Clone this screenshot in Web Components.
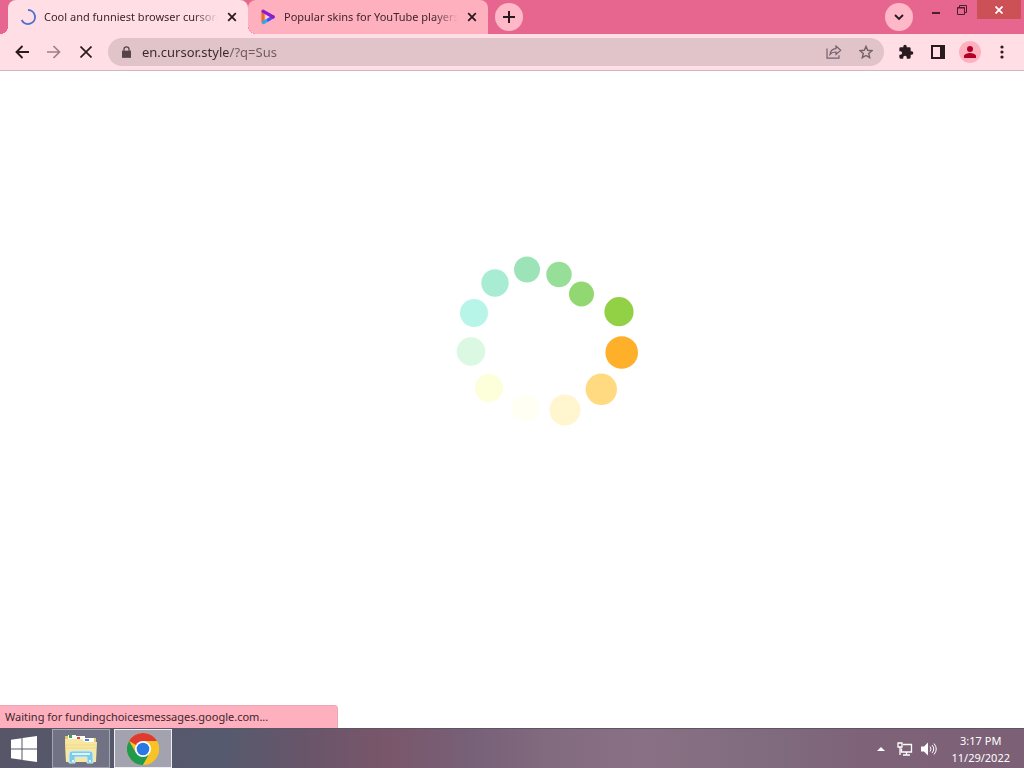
<!DOCTYPE html>
<html lang="en">
<head>
<meta charset="utf-8">
<title>Cool and funniest browser cursors</title>
<style>
  html, body { height: 100%; }
  body {
    margin: 0;
    font-family: "Noto Sans", "Open Sans", sans-serif;
    font-size: 11px;
    color: #3d252c;
    --frame: #e66690;
    --tab-active: #ffdfe5;
    --tab-idle: #ffb0be;
    --ink: #2a1a20;
  }
</style>
</head>
<body>
<desktop-screen></desktop-screen>

<script>
const define = (name, html, setup) => {
  const template = document.createElement('template');
  template.innerHTML = html;
  customElements.define(name, class extends HTMLElement {
    constructor() {
      super();
      this.attachShadow({ mode: 'open' }).append(template.content.cloneNode(true));
    }
    connectedCallback() { if (setup) setup(this, this.shadowRoot); }
  });
};

define('icon-button', `
  <style>
    :host { display: block; flex: none; width: 32px; height: 28px; }
    button {
      display: grid; place-items: center; width: 100%; height: 100%;
      margin: 0; padding: 0; border: 0; background: none; color: inherit; font: inherit;
      border-radius: var(--button-radius, 14px);
    }
  </style>
  <button type="button"><slot></slot></button>
`, (host, root) => root.querySelector('button').setAttribute('aria-label', host.getAttribute('label')));

define('browser-tab', `
  <style>
    :host { display: block; position: relative; flex: 0 1 240px; min-width: 0; height: 34px; background: var(--tab-idle); border-radius: 8px 8px 0 8px; }
    :host([active]) { background: var(--tab-active); border-radius: 8px 8px 0 0; z-index: 1; }
    :host([active])::before, :host([active])::after {
      content: ""; position: absolute; bottom: 0; width: 8px; height: 8px;
    }
    :host([active])::before { right: 100%; background: radial-gradient(circle at 0 0, transparent 8px, var(--tab-active) 8px); }
    :host([active])::after { left: 100%; background: radial-gradient(circle at 100% 0, transparent 8px, var(--tab-active) 8px); }
    .row { display: flex; align-items: center; height: 100%; padding: 0 6px 0 12px; }
    .fav { flex: none; display: grid; width: 16px; height: 16px; margin-right: 8px; }
    .title {
      flex: 1; min-width: 0; overflow: hidden; white-space: nowrap; line-height: 18px;
      -webkit-mask-image: linear-gradient(to left, transparent, #000 24px);
      mask-image: linear-gradient(to left, transparent, #000 24px);
    }
    icon-button { width: 20px; height: 20px; margin-left: 4px; color: var(--ink); }
  </style>
  <div class="row">
    <span class="fav"><slot name="favicon"></slot></span>
    <span class="title"><slot></slot></span>
    <icon-button label="Close tab"><svg width="10" height="10" viewBox="0 0 10 10" stroke="currentColor" stroke-width="1.8"><path d="M1.200 1.200l7.600 7.600M8.800 1.200l-7.600 7.600"/></svg></icon-button>
  </div>
`);

define('tab-strip', `
  <style>
    :host { display: flex; align-items: flex-start; height: 34px; padding: 0 3px 0 8px; background: var(--frame); }
    .tabs { display: flex; flex: 0 1 480px; min-width: 0; }
    svg { display: block; }
    .round { width: 28px; margin-top: 3px; background: #ffb8c8; border-radius: 50%; color: var(--ink); }
    .new { margin-left: 7px; }
    .search { margin-left: auto; }
    .window { display: flex; margin-left: 10px; color: #4b1f30; }
    .window icon-button { width: 26px; height: 19px; }
    .window .close { width: 44px; margin-left: 2px; background: #cc5156; color: #fff; --button-radius: 0; }
  </style>
  <div class="tabs">
    <browser-tab active>
      <svg slot="favicon" width="16" height="16" viewBox="0 0 16 16" fill="none" stroke="#4c70d0" stroke-width="1.9"><path d="M8 1a7 7 0 1 1-6.300 10"/></svg>
      Cool and funniest browser cursors
    </browser-tab>
    <browser-tab>
      <svg slot="favicon" width="16" height="16" viewBox="0 0 16 16" stroke-linejoin="round" stroke-linecap="round" fill="none" stroke-width="3.200">
        <path d="M3 3v10" stroke="#f06a28"/><path d="M3.500 13.500l5-2.800" stroke="#2fa6f0"/><path d="M8.500 10.700L13 8" stroke="#5a48e8"/><path d="M3 2.200L13.200 8" stroke="#8a1cd2"/>
        <path d="M5.500 6l3.500 2-3.500 2z" fill="#ffd0dc" stroke="none"/>
      </svg>
      Popular skins for YouTube players
    </browser-tab>
  </div>
  <icon-button class="round new" label="New tab"><svg width="12" height="12" viewBox="0 0 12 12" stroke="currentColor" stroke-width="2"><path d="M6 0v12M0 6h12"/></svg></icon-button>
  <icon-button class="round search" label="Search tabs"><svg width="10" height="7" viewBox="0 0 10 7" fill="none" stroke="currentColor" stroke-width="1.900"><path d="M1 1l4 4 4-4"/></svg></icon-button>
  <div class="window">
    <icon-button label="Minimize"><svg width="10" height="14" viewBox="0 0 10 14"><path d="M1 9h8v2H1z" fill="currentColor"/></svg></icon-button>
    <icon-button label="Restore"><svg width="10" height="10" viewBox="0 0 10 10" fill="none" stroke="currentColor"><path d="M.5 2.500h7v7h-7zM2.500 2.500v-2h7v7h-2M.5 3h7"/></svg></icon-button>
    <icon-button class="close" label="Close"><svg width="8" height="8" viewBox="0 0 8 8" stroke="currentColor" stroke-width="1.800"><path d="M.5.5l7 7M7.500.5l-7 7"/></svg></icon-button>
  </div>
`);

define('address-bar', `
  <style>
    :host { display: flex; flex: 1; align-items: center; min-width: 0; height: 28px; margin: 0 6px; padding: 0 2px; background: #e0c4ca; border-radius: 14px; box-sizing: border-box; color: #76616a; }
    .lock { color: #57444b; }
    input {
      flex: 1; min-width: 0; height: 28px; margin: 0; padding: 0; border: 0; outline: 0;
      font: inherit; font-size: 13px; color: transparent;
      background: linear-gradient(90deg, #3b272e 86px, #6f5860 86px);
      -webkit-background-clip: text; background-clip: text;
    }
  </style>
  <icon-button class="lock" label="View site information"><svg width="9" height="12" viewBox="0 0 10 13"><path d="M0 5h10v8H0z" fill="currentColor"/><path d="M2.200 5.500V3.500a2.800 2.800 0 0 1 5.600 0v2" fill="none" stroke="currentColor" stroke-width="1.400"/></svg></icon-button>
  <input type="text" aria-label="Address and search bar" value="en.cursor.style/?q=Sus" spellcheck="false">
  <icon-button label="Share this page"><svg width="16" height="14" viewBox="0 0 16 14" fill="none" stroke="currentColor" stroke-width="1.200"><path d="M1 3.500v9.700h12v-3M4 9.500c.4-3.800 2.600-5.700 6-5.900V1l4.700 4.300L10 9.500V7C7.500 7 5.500 7.600 4 9.500z"/></svg></icon-button>
  <icon-button label="Bookmark this tab"><svg width="14" height="14" viewBox="0 0 14 14" fill="none" stroke="currentColor" stroke-width="1.400"><path d="M7 1.400l1.700 3.900 4.200.4-3.200 2.800 1 4.200L7 10.500l-3.700 2.200 1-4.200L1.100 5.700l4.200-.4z"/></svg></icon-button>
`);

define('browser-toolbar', `
  <style>
    :host { display: flex; align-items: center; height: 36px; padding: 0 6px; background: var(--tab-active); border-bottom: 1px solid #cdb9bd; color: var(--ink); }
    .dim { color: #9d8188; }
    .avatar { display: grid; place-items: center; width: 22px; height: 22px; border-radius: 50%; background: #ffb0be; }
  </style>
  <icon-button label="Back"><svg width="14" height="14" viewBox="0 0 14 14" fill="none" stroke="currentColor" stroke-width="1.900"><path d="M14 7H1.500M7.500 1l-6 6 6 6"/></svg></icon-button>
  <icon-button class="dim" label="Forward"><svg width="14" height="14" viewBox="0 0 14 14" fill="none" stroke="currentColor" stroke-width="1.700"><path d="M0 7h12.500M6.500 1l6 6-6 6"/></svg></icon-button>
  <icon-button label="Stop"><svg width="12" height="12" viewBox="0 0 12 12" stroke="currentColor" stroke-width="1.700"><path d="M.5.5l11 11M11.500.5l-11 11"/></svg></icon-button>
  <address-bar></address-bar>
  <icon-button label="Extensions"><svg width="16" height="16" viewBox="0 0 24 24" fill="currentColor"><path d="M20.500 11H19V7a2 2 0 0 0-2-2h-4V3.500a2.500 2.500 0 0 0-5 0V5H4a2 2 0 0 0-2 2v3.800h1.500a2.700 2.700 0 0 1 0 5.400H2V20a2 2 0 0 0 2 2h3.800v-1.500a2.700 2.700 0 0 1 5.400 0V22H17a2 2 0 0 0 2-2v-4h1.500a2.500 2.500 0 0 0 0-5z"/></svg></icon-button>
  <icon-button label="Side panel"><svg width="14" height="14" viewBox="0 0 14 14"><path d="M0 0h14v14H0zM2 2v10h7V2z" fill="currentColor" fill-rule="evenodd"/></svg></icon-button>
  <icon-button label="Profile"><span class="avatar"><svg width="12" height="12" viewBox="0 0 12 12" fill="#b00024"><circle cx="6" cy="3" r="3"/><path d="M0 12v-2c0-2 4-3 6-3s6 1 6 3v2z"/></svg></span></icon-button>
  <icon-button label="Menu"><svg width="4" height="14" viewBox="0 0 4 14" fill="currentColor"><circle cx="2" cy="2" r="1.600"/><circle cx="2" cy="7" r="1.600"/><circle cx="2" cy="12" r="1.600"/></svg></icon-button>
`);

define('loading-dots', `
  <style>
    :host { display: block; }
    svg { display: block; }
  </style>
  <svg width="184" height="172" viewBox="455 255 184 172" role="img" aria-label="Loading">
    <circle cx="527" cy="269.500" r="13" fill="#9ce4b8"/>
    <circle cx="559" cy="274.500" r="12.700" fill="#97df98"/>
    <circle cx="581.500" cy="294" r="12.500" fill="#91d873"/>
    <circle cx="619" cy="311.700" r="14.600" fill="#92d046"/>
    <circle cx="621.700" cy="352.500" r="16.300" fill="#ffb02a"/>
    <circle cx="601.300" cy="389.300" r="15.700" fill="#ffda80"/>
    <circle cx="565" cy="410" r="15.500" fill="#fff6d0"/>
    <circle cx="525" cy="408" r="14" fill="#fffff4"/>
    <circle cx="489" cy="388" r="14" fill="#fcffd9"/>
    <circle cx="471" cy="351.500" r="14.300" fill="#dbf8e2"/>
    <circle cx="474" cy="313" r="14" fill="#b8f5e9"/>
    <circle cx="495" cy="283" r="13.700" fill="#a8ecd4"/>
  </svg>
`);

define('page-view', `
  <style>
    :host { display: flex; flex: 1; position: relative; justify-content: center; align-items: flex-start; min-height: 0; padding: 184px 0 0 70px; box-sizing: border-box; background: #fff; overflow: hidden; }
    .status {
      position: absolute; left: 0; bottom: 0; width: 33%; box-sizing: border-box;
      padding: 2px 5px; line-height: 18px; white-space: nowrap;
      background: #ffb0be; border-radius: 0 4px 0 0; border: 1px solid #eda7b4; border-width: 1px 1px 0 0;
    }
  </style>
  <loading-dots></loading-dots>
  <div class="status" role="status">Waiting for fundingchoicesmessages.google.com...</div>
`);

define('task-bar', `
  <style>
    :host { display: flex; align-items: center; height: 40px; box-sizing: border-box; padding-right: 14px; color: #fff;
      background: linear-gradient(90deg, #565668 0, #565a6e 22%, #69556a 30%, #7a566a 38%, #776178 46%, #846c80 55%, #8a7084 63%, #806c7e 74%, #7e6278 85%, #7c6076 100%);
      border-top: 1px solid #5d5565; }
    svg { display: block; }
    icon-button { --button-radius: 0; }
    .start { width: 48px; height: 38px; margin-right: 4px; }
    .app { width: 56px; height: 37px; margin-right: 4px; border: 1px solid #a5a5b2; background: #717283; }
    .app.current { border-color: #eeeef2; background: #a3a2af; }
    .tray { display: flex; margin-left: auto; }
    .tray icon-button { width: 24px; }
    .clock { margin-left: 10px; text-align: center; line-height: 17px; }
    time { display: block; }
  </style>
  <icon-button class="start" label="Start"><svg width="26" height="26" viewBox="0 0 26 26" fill="#fff"><path d="M0 3.700L10.500 2.200v10.300H0zM11.500 2L26 0v12.500H11.500zM0 13.500h10.500v10.300L0 22.300zM11.500 13.500H26V26l-14.500-2z"/></svg></icon-button>
  <icon-button class="app" label="File Explorer"><svg width="34" height="30" viewBox="0 0 34 30">
    <path d="M1 2h10l2 2h19v24H2z" fill="#e5ca70"/>
    <path d="M4 1h8v5H4z" fill="#fff"/><path d="M5 1h3v3H5z" fill="#36a845"/><path d="M12 2h9v5h-9z" fill="#fff"/><path d="M13 3h3v2h-3z" fill="#dc4632"/><path d="M20 4h10v5H20z" fill="#fff"/><path d="M21 5h4v2h-4z" fill="#4c86ce"/>
    <path d="M1 5h17l3 3h12l-1 20H2z" fill="#f8e7a0"/><path d="M2 11h30M2 14h30" stroke="#eed987"/>
    <path d="M5 29V20q0-3 3-3h18q3 0 3 3v9h-6v-6H11v6z" fill="#7dcbe8" stroke="#c7eefa"/><path d="M8 20h18M8 27h2M25 27h2" stroke="#d9f6ff" stroke-width="2"/>
  </svg></icon-button>
  <icon-button class="app current" label="Google Chrome"><svg width="32" height="32" viewBox="0 0 48 48">
    <circle cx="24" cy="24" r="24" fill="#f9c326"/>
    <path d="M24 24L3.200 12A24 24 0 0 1 44.800 12z" fill="#e03b30"/><path d="M24 12h20.800L24 24z" fill="#e03b30"/>
    <path d="M3.200 12A24 24 0 0 0 24 48l10.400-18L24 24l-10.400 6z" fill="#209a4c"/>
    <path d="M24 12h20.800A24 24 0 0 1 24 48l10.400-18z" fill="#f9c326"/>
    <circle cx="24" cy="24" r="12" fill="#fff"/><circle cx="24" cy="24" r="9.500" fill="#2a78e4"/>
  </svg></icon-button>
  <div class="tray">
    <icon-button label="Show hidden icons"><svg width="8" height="4" viewBox="0 0 8 4"><path d="M0 4l4-4 4 4z" fill="#fff"/></svg></icon-button>
    <icon-button label="Network"><svg width="16" height="14" viewBox="0 0 16 14" fill="none" stroke="#fff" stroke-width="1.300"><path d="M6 2.500h8.500v7.500H4.500V6.500M9.500 10v3M6 13h7M1 1h4v4H1zM3 5v8"/></svg></icon-button>
    <icon-button label="Volume"><svg width="16" height="14" viewBox="0 0 16 14" fill="none" stroke="#fff"><path d="M0 4.500h3L7 .5v13l-4-4H0z" fill="#fff" stroke="none"/><path d="M9 4.500q2 2.500 0 5M11 3q3.500 4 0 8M13 1.500q4.500 5.500 0 11"/></svg></icon-button>
  </div>
  <div class="clock"><time datetime="15:17">3:17 PM</time><time datetime="2022-11-29">11/29/2022</time></div>
`);

define('desktop-screen', `
  <style>:host { display: flex; flex-direction: column; min-height: 100vh; }</style>
  <tab-strip></tab-strip>
  <browser-toolbar></browser-toolbar>
  <page-view></page-view>
  <task-bar></task-bar>
`);
</script>
</body>
</html>
